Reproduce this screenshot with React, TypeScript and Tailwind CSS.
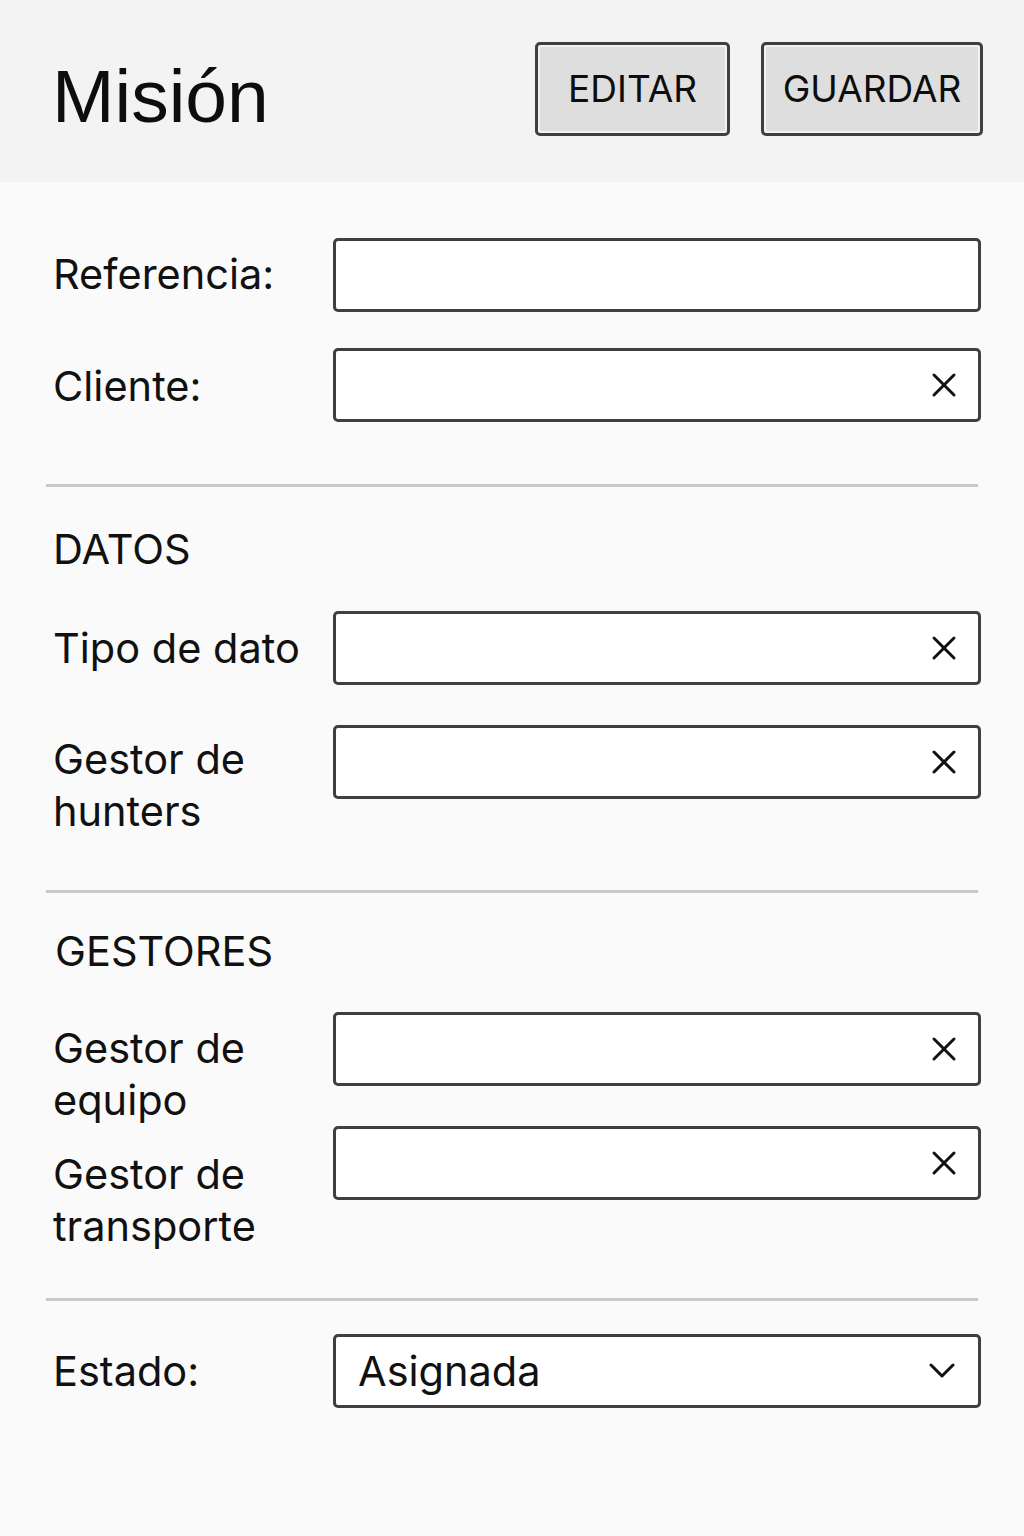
const labelCls = "w-[280px] shrink-0 text-[41.5px] leading-[52px] text-[#111] font-['Inter',sans-serif]";
const boxCls = "flex-1 h-[74px] flex items-center justify-end bg-white border-[3px] border-[#3f3f3f] rounded-[5px] pr-[21px]";

function ClearIcon() {
  return (
    <svg width="26" height="26" viewBox="0 0 26 26" fill="none" stroke="#111" strokeWidth="3" strokeLinecap="round">
      <path d="M3 3 L23 23 M23 3 L3 23" />
    </svg>
  );
}

function Chevron() {
  return (
    <svg width="26" height="16" viewBox="0 0 26 16" fill="none" stroke="#111" strokeWidth="3" strokeLinecap="round" strokeLinejoin="round">
      <path d="M2 2 L13 13 L24 2" />
    </svg>
  );
}

function Field({ label, clear = true, pt = 'pt-[11px]' }: { label: string; clear?: boolean; pt?: string }) {
  return (
    <div className="flex items-start">
      <div className={`${labelCls} ${pt}`}>{label}</div>
      <div className={boxCls}>{clear && <ClearIcon />}</div>
    </div>
  );
}

function Divider() {
  return <div className="h-[3px] bg-[#c9c9c9] ml-[-7px] mr-[3px]" />;
}

function Section({ title, className = '' }: { title: string; className?: string }) {
  return (
    <div className={`text-[41.5px] leading-[52px] text-[#111] font-['Inter',sans-serif] ${className}`}>{title}</div>
  );
}

const btnCls =
  "h-[94px] bg-[#dedede] border-[3px] border-[#3f3f3f] rounded-[5px] shadow-[inset_0_0_0_2px_#f2f2f2] text-[37px] text-[#0d0d0d] font-['Inter',sans-serif]";

export default function App() {
  return (
    <div className="min-h-[1536px] bg-[#fafafa]">
      <header className="h-[182px] bg-[#f3f3f3] flex items-center justify-between pl-[52px] pr-[41px]">
        <h1 className="pt-[10px] text-[75px] leading-none text-[#0d0d0d] font-['Liberation_Sans',sans-serif]">Misión</h1>
        <div className="flex gap-[31px] mt-[-4px]">
          <button type="button" className={`w-[195px] ${btnCls}`}>
            EDITAR
          </button>
          <button type="button" className={`w-[222px] ${btnCls}`}>
            GUARDAR
          </button>
        </div>
      </header>

      <main className="flex flex-col pl-[53px] pr-[43px] pt-[56px]">
        <Field label="Referencia:" clear={false} pt="pt-[10px]" />
        <div className="h-[36px]" />
        <Field label="Cliente:" pt="pt-[12px]" />
        <div className="h-[62px]" />
        <Divider />
        <Section title="DATOS" className="mt-[36px]" />
        <div className="h-[36px]" />
        <Field label="Tipo de dato" pt="pt-[11px]" />
        <div className="h-[40px]" />
        <Field label="Gestor de hunters" pt="pt-[8px]" />
        <div className="h-[53px]" />
        <Divider />
        <Section title="GESTORES" className="mt-[32px] ml-[2px]" />
        <div className="h-[35px]" />
        <Field label="Gestor de equipo" pt="pt-[10px]" />
        <Field label="Gestor de transporte" pt="pt-[22px]" />
        <div className="h-[46px]" />
        <Divider />
        <div className="h-[33px]" />
        <div className="flex items-start">
          <div className={`${labelCls} pt-[11px]`}>Estado:</div>
          <div className="flex-1 h-[74px] flex items-center justify-between bg-white border-[3px] border-[#3f3f3f] rounded-[5px] pl-[22px] pr-[23px]">
            <span className="text-[41.5px] text-[#111] font-['Inter',sans-serif]">Asignada</span>
            <Chevron />
          </div>
        </div>
      </main>
    </div>
  );
}
